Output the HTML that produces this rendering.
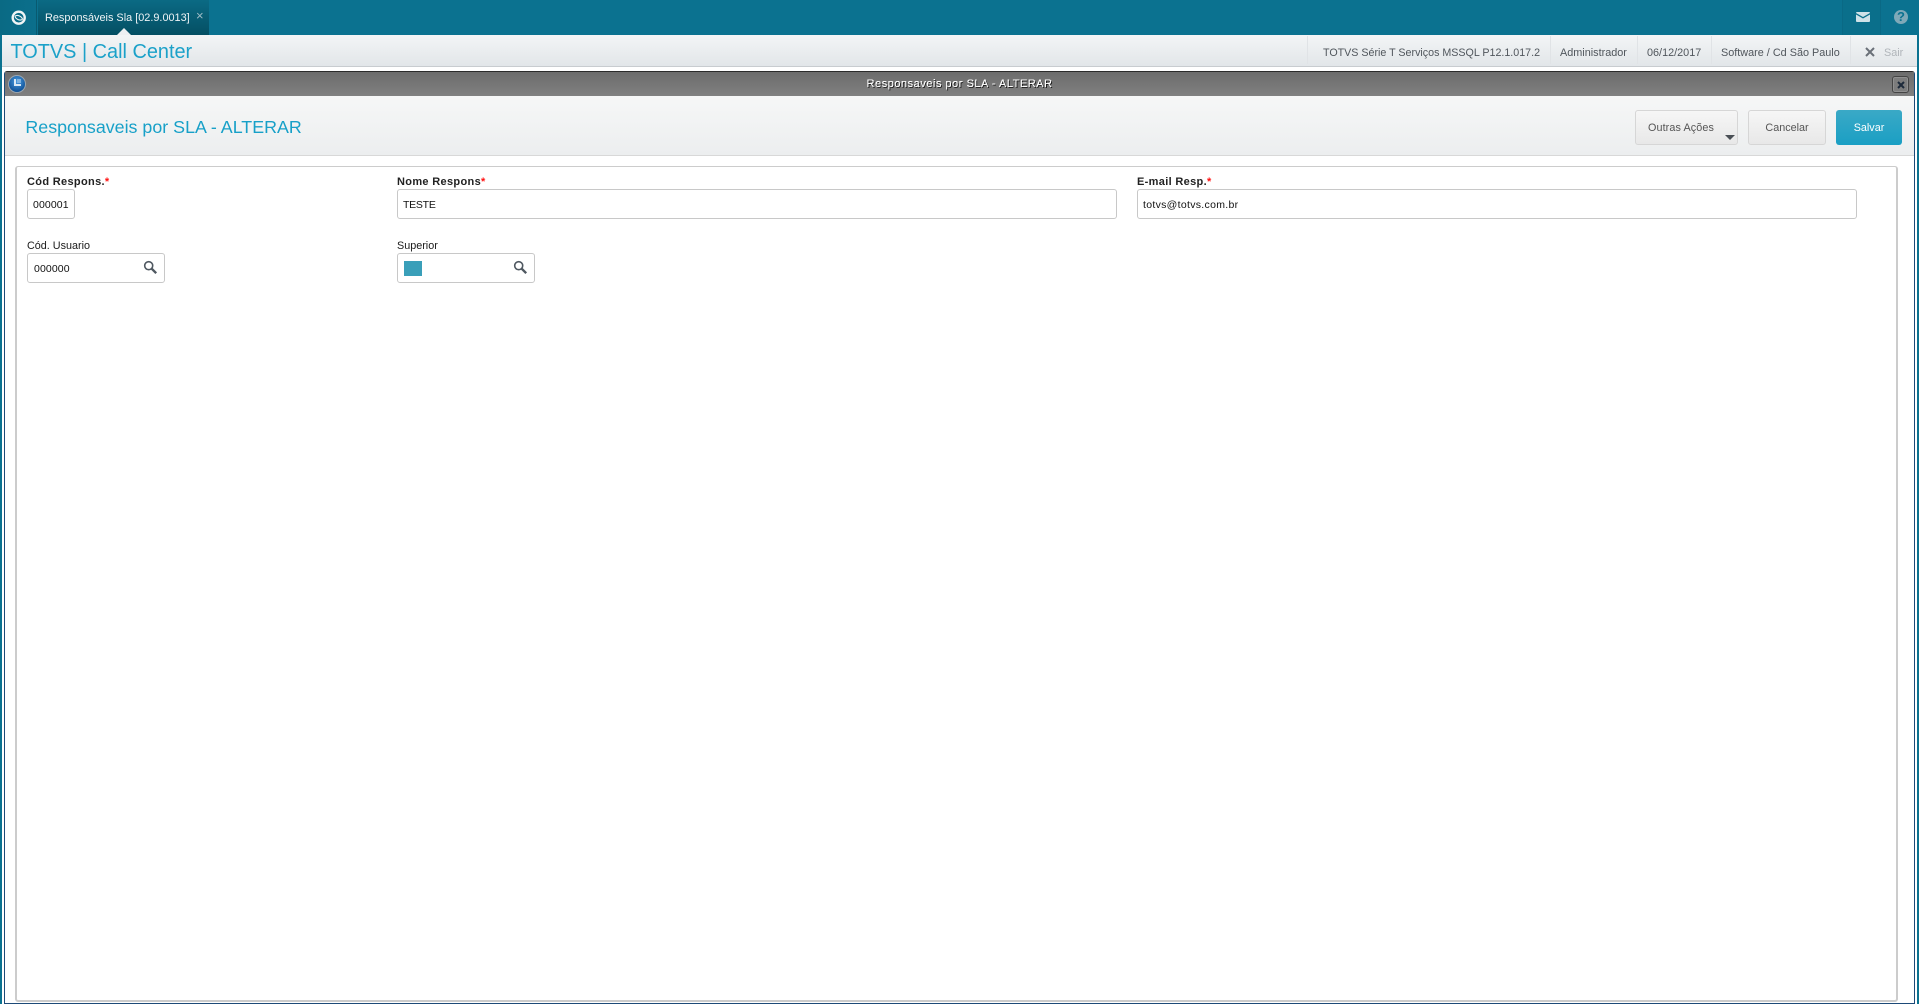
<!DOCTYPE html>
<html lang="pt-BR">
<head>
<meta charset="utf-8">
<title>TOTVS | Call Center</title>
<style>
html,body{margin:0;padding:0;width:1919px;height:1004px;overflow:hidden;background:#fff;font-family:"Liberation Sans",Arial,sans-serif;}
.a{position:absolute;white-space:nowrap;box-sizing:border-box;}
.lbl{font-size:10.8px;line-height:14px;color:#1a1a1a;}
.lbl.b{font-weight:bold;font-size:11px;color:#222;letter-spacing:.33px}
.lbl i{color:#f11;font-style:normal;font-weight:bold}
.inp{border:1px solid #c8c8c8;border-radius:3px;background:#fff;height:30px;font-size:10.5px;line-height:30px;color:#111;padding-left:5px;letter-spacing:.1px}
.top{font-size:10.7px;line-height:14px;color:#50565c;}
.top.w{font-size:10.85px}
.sep{width:1px;height:28px;top:36px;background:#e0e3e6;}
.btn{border:1px solid #d6d6d6;border-radius:3px;background:linear-gradient(#f6f6f6,#e8e8e8);font-size:10.8px;color:#555;text-align:center;line-height:35px;height:35px;top:110px}
</style>
</head>
<body>
<!-- top bar -->
<div class="a" style="left:0;top:0;width:1919px;height:35px;background:#0b7290;"></div>
<div class="a" style="left:0;top:0;width:37px;height:35px;background:linear-gradient(90deg,#0a6a84,#0b6f8c);border-right:1px solid #095a70;"></div>
<svg class="a" style="left:9px;top:8px" width="20" height="20" viewBox="0 0 20 20">
<circle cx="9.7" cy="9.7" r="6" fill="none" stroke="#f1f5f6" stroke-width="2.4"/>
<path d="M6 8.2 C8.5 6.4 13 8.4 13.6 11.4 M6 8.2 C6.5 10.8 10.5 13.2 13.6 11.4" fill="none" stroke="#f1f5f6" stroke-width="1.1"/>
</svg>
<div class="a" style="left:38px;top:0;width:171px;height:35px;background:linear-gradient(#0b6a84,#044f63);"></div>
<div class="a" style="left:45px;top:11px;font-size:10.9px;line-height:14px;color:#eef4f6;">Responsáveis Sla [02.9.0013]</div>
<div class="a" style="left:196px;top:9px;font-size:13px;line-height:14px;color:#9fbcc6;">×</div>
<div class="a" style="left:117px;top:28px;width:0;height:0;border-left:7px solid transparent;border-right:7px solid transparent;border-bottom:7px solid #eef0f2;"></div>
<div class="a" style="left:1842px;top:0;width:38px;height:35px;background:#0a6f8b;border-left:1px solid #0a6985;"></div>
<div class="a" style="left:1880px;top:0;width:39px;height:35px;background:#0b7290;border-left:1px solid #0a6985;"></div>
<svg class="a" style="left:1856px;top:12px" width="14" height="10" viewBox="0 0 14 10">
<path d="M0 1 Q0 0 1 0 H13 Q14 0 14 1 L7 5 Z" fill="#cfe2e8"/>
<path d="M0 2.5 L7 6.5 L14 2.5 V9 Q14 10 13 10 H1 Q0 10 0 9 Z" fill="#cfe2e8"/>
</svg>
<div class="a" style="left:1894px;top:10px;width:14px;height:14px;border-radius:50%;background:#7fa9b8;color:#0b7290;font-size:13px;font-weight:bold;line-height:14px;text-align:center;">?</div>

<!-- app bar -->
<div class="a" style="left:0;top:35px;width:1919px;height:969px;background:#fff;"></div>
<div class="a" style="left:0;top:35px;width:2px;height:969px;background:#0b7290;"></div>
<div class="a" style="left:1917px;top:35px;width:2px;height:969px;background:#0b7290;"></div>
<div class="a" style="left:2px;top:35px;width:1915px;height:32px;background:linear-gradient(#f3f5f6,#e2e6e9);border-bottom:1px solid #c8ccd0;"></div>
<div class="a" style="left:10.5px;top:40px;font-size:19.9px;line-height:24px;color:#1ba1c9;">TOTVS | Call Center</div>
<div class="a sep" style="left:1307px"></div>
<div class="a top" style="left:1323px;top:46px;">TOTVS Série T Serviços MSSQL P12.1.017.2</div>
<div class="a sep" style="left:1550px"></div>
<div class="a top w" style="left:1560px;top:46px;">Administrador</div>
<div class="a sep" style="left:1637px"></div>
<div class="a top w" style="left:1647px;top:46px;">06/12/2017</div>
<div class="a sep" style="left:1711px"></div>
<div class="a top w" style="left:1721px;top:46px;">Software / Cd São Paulo</div>
<div class="a sep" style="left:1850px"></div>
<svg class="a" style="left:1865px;top:47px" width="10" height="10" viewBox="0 0 10 10"><path d="M1 1 L9 9 M9 1 L1 9" stroke="#6a7078" stroke-width="2"/></svg>
<div class="a" style="left:1884px;top:46px;font-size:10.85px;line-height:14px;color:#b0b5ba;">Sair</div>

<!-- window -->
<div class="a" style="left:4px;top:71px;width:1911px;height:933px;border:1px solid #1d4a78;border-top:1px solid #2b2b2b;border-radius:3px 3px 0 0;background:#fff;"></div>
<div class="a" style="left:5px;top:72px;width:1909px;height:24px;background:linear-gradient(#6c6c6c,#808080);"></div>
<div class="a" style="left:8px;top:75px;width:18px;height:18px;border-radius:50%;background:radial-gradient(circle at 50% 35%,#4a9be0,#0d4f95 78%);border:1px solid #9aa6b0;"></div>
<svg class="a" style="left:12px;top:78px" width="11" height="11" viewBox="0 0 11 11"><path d="M2 1 H4 V6 H9 V8 H2 Z" fill="#d9e8f5"/><path d="M5 1 H9 V5 H5 Z" fill="#7fb2e0"/></svg>
<div class="a" style="left:0;width:1919px;top:77px;text-align:center;font-size:11px;line-height:14px;color:#fff;letter-spacing:.52px;text-shadow:1px 1px 0 #1a1a1a,.4px 0 0 #fff;">Responsaveis por SLA - ALTERAR</div>
<div class="a" style="left:1892px;top:76px;width:17px;height:17px;border:1px solid #444;border-radius:3px;background:#7c7c7c;box-shadow:inset 0 0 0 1px #8f8f8f;"></div>
<svg class="a" style="left:1897px;top:81px" width="8" height="8" viewBox="0 0 8 8"><path d="M1 1 L7 7 M7 1 L1 7" stroke="#1d2a3a" stroke-width="2"/></svg>

<!-- header -->
<div class="a" style="left:5px;top:96px;width:1909px;height:60px;background:linear-gradient(#f6f7f7,#eceeef);border-bottom:1px solid #d8d8d8;"></div>
<div class="a" style="left:25.4px;top:115.5px;font-size:17.85px;line-height:22px;color:#17a0c8;">Responsaveis por SLA - ALTERAR</div>
<div class="a btn" style="left:1635px;width:103px;padding-right:11px;letter-spacing:.1px">Outras Ações</div>
<div class="a" style="left:1725px;top:135px;width:0;height:0;border-left:5px solid transparent;border-right:5px solid transparent;border-top:5px solid #4a4f55;"></div>
<div class="a btn" style="left:1748px;width:78px;">Cancelar</div>
<div class="a btn" style="left:1836px;width:66px;border:0;border-radius:3px;background:linear-gradient(#3aa9c6,#1a9fc4);color:#fff;line-height:37px;">Salvar</div>

<!-- frame -->
<div class="a" style="left:15px;top:166px;width:1883px;height:836px;border:1px solid #cccccc;border-width:1px 2px 2px 2px;border-radius:3px;background:#fff;"></div>

<!-- fields -->
<div class="a lbl b" style="left:27px;top:175px;">Cód Respons.<i>*</i></div>
<div class="a inp" style="left:27px;top:189px;width:48px;">000001</div>
<div class="a lbl b" style="left:397px;top:175px;">Nome Respons<i>*</i></div>
<div class="a inp" style="left:397px;top:189px;width:720px;letter-spacing:-.25px;">TESTE</div>
<div class="a lbl b" style="left:1137px;top:175px;">E-mail Resp.<i>*</i></div>
<div class="a inp" style="left:1137px;top:189px;width:720px;letter-spacing:.3px;">totvs@totvs.com.br</div>

<div class="a lbl" style="left:27px;top:239px;">Cód. Usuario</div>
<div class="a inp" style="left:27px;top:253px;width:138px;padding-left:6px;">000000</div>
<svg class="a" style="left:143px;top:260px" width="15" height="15" viewBox="0 0 15 15"><circle cx="5.7" cy="5.7" r="4" fill="none" stroke="#4f5861" stroke-width="1.6"/><path d="M8.8 8.8 L13.2 13.2" stroke="#4f5861" stroke-width="2.4"/></svg>
<div class="a lbl" style="left:397px;top:239px;">Superior</div>
<div class="a inp" style="left:397px;top:253px;width:138px;"></div>
<div class="a" style="left:404px;top:261px;width:18px;height:15px;background:#3a9fb9;"></div>
<svg class="a" style="left:513px;top:260px" width="15" height="15" viewBox="0 0 15 15"><circle cx="5.7" cy="5.7" r="4" fill="none" stroke="#4f5861" stroke-width="1.6"/><path d="M8.8 8.8 L13.2 13.2" stroke="#4f5861" stroke-width="2.4"/></svg>
</body>
</html>
